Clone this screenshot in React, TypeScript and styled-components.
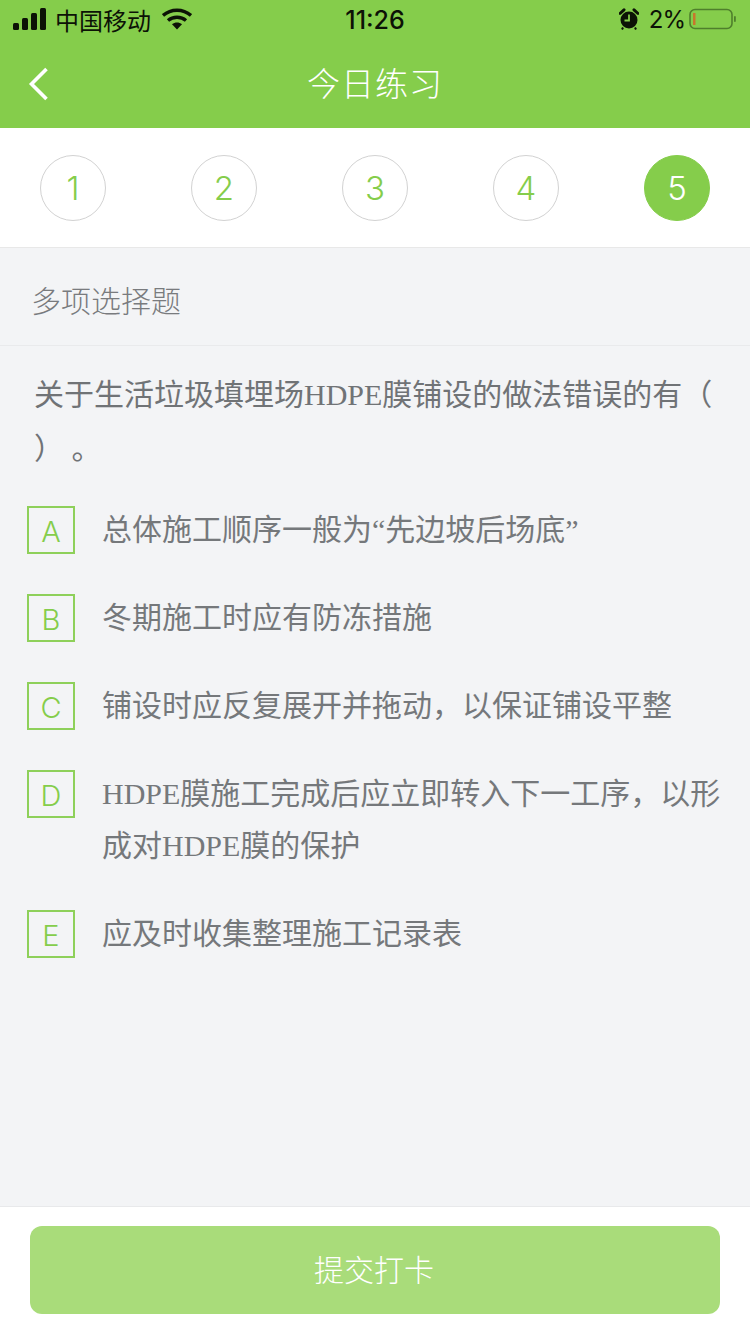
import React from "react";
import styled, { createGlobalStyle } from "styled-components";

const Global = createGlobalStyle`
  html, body { margin: 0; padding: 0; background: #f3f4f6; }
  * { box-sizing: border-box; }
`;
const Page = styled.div`
  width: 750px; height: 1334px; display: flex; flex-direction: column;
  background: #f3f4f6; overflow: hidden;
  font-family: "Liberation Serif", "Noto Sans CJK SC", serif;
`;
const Header = styled.header`background: #85cd4b; height: 128px; display: flex; flex-direction: column;`;
const StatusBar = styled.div`
  height: 40px; padding: 0 13px 2px 13px; display: grid; grid-template-columns: 1fr auto 1fr; align-items: center;
  color: #0c1206; font-family: "Noto Sans CJK SC", sans-serif;
`;
const StatusLeft = styled.div`display: flex; align-items: center; gap: 8px; font-size: 24px;`;
const StatusRight = styled.div`display: flex; align-items: center; justify-content: flex-end; gap: 10px; font-size: 24px; font-family: "Inter", sans-serif;`;
const Clock = styled.div`font: 500 25px "Inter", sans-serif; padding-top: 2px;`;
const Percent = styled.span`letter-spacing: -1px;`;
const Nav = styled.div`flex: 1; display: flex; align-items: center; justify-content: center; position: relative; padding-bottom: 5px;`;
const Back = styled.svg`position: absolute; left: 28px; top: 27px;`;
const Title = styled.h1`margin: 0; font: 300 33px "Noto Sans CJK SC", sans-serif; color: #fff; letter-spacing: 1px;`;
const Steps = styled.div`
  height: 120px; background: #fff; border-bottom: 1px solid #e8e8e8;
  padding: 1px 40px 0; display: flex; justify-content: space-between; align-items: center;
`;
const Step = styled.div<{ $active?: boolean }>`
  width: 66px; height: 66px; border-radius: 50%; display: flex; align-items: center; justify-content: center;
  border: 1px solid ${p => (p.$active ? "#85cd4b" : "#d2d2d2")};
  background: ${p => (p.$active ? "#85cd4b" : "#fff")};
  color: ${p => (p.$active ? "#fff" : "#85cd4b")};
  font: 300 33px "Inter", sans-serif;
`;
const Kind = styled.div`
  height: 98px; padding: 5px 31px 0; border-bottom: 1px solid #e9eaec; display: flex; align-items: center;
  color: #797b7e; font: 300 30px/1 "Noto Sans CJK SC", sans-serif;
`;
const Main = styled.main`flex: 1; padding: 22px 29px 0 27px;`;
const Question = styled.p`
  margin: 0 0 28px; padding-left: 7px; font-size: 30px; font-weight: 400; line-height: 54px; color: #707376;
`;
const Options = styled.div`display: flex; flex-direction: column; gap: 36px;`;
const Option = styled.div`display: flex; gap: 27px; align-items: flex-start;`;
const Letter = styled.div`
  flex: none; width: 48px; height: 48px; margin-top: 2px; padding-top: 3px; border: 2px solid #8ed05a; color: #85cd4b;
  display: flex; align-items: center; justify-content: center; font: 300 29px "Inter", sans-serif;
`;
const OptionText = styled.div`font-size: 30px; font-weight: 400; line-height: 52px; color: #75787b;`;
const Footer = styled.footer`
  height: 128px; background: #fff; border-top: 1px solid #e8e9eb; padding: 19px 30px 0;
`;
const Submit = styled.button`
  display: block; width: 690px; height: 88px; border: 0; border-radius: 12px; background: #a9dc7a; padding: 0 2px 4px 0;
  color: #fff; font: 300 30px "Noto Sans CJK SC", sans-serif;
`;

const options: [string, string][] = [
  ["A", "总体施工顺序一般为“先边坡后场底”"],
  ["B", "冬期施工时应有防冻措施"],
  ["C", "铺设时应反复展开并拖动，以保证铺设平整"],
  ["D", "HDPE膜施工完成后应立即转入下一工序，以形成对HDPE膜的保护"],
  ["E", "应及时收集整理施工记录表"],
];

export default function App() {
  return (
    <Page>
      <Global />
      <Header>
        <StatusBar>
          <StatusLeft>
            <svg width="34" height="22" viewBox="0 0 34 22" fill="#0c1206">
              <rect x="0" y="15" width="6" height="7" rx="1.5" />
              <rect x="9" y="10" width="6" height="12" rx="1.5" />
              <rect x="18" y="5" width="6" height="17" rx="1.5" />
              <rect x="27" y="0" width="6" height="22" rx="1.5" />
            </svg>
            <span>中国移动</span>
            <svg width="30" height="22" viewBox="0 0 30 22" style={{ marginLeft: 3 }}>
              <path d="M1 7.5C9 .5 21 .5 29 7.5" fill="none" stroke="#0c1206" strokeWidth="3.4" />
              <path d="M6 12.5C11 8.2 19 8.2 24 12.5" fill="none" stroke="#0c1206" strokeWidth="3.4" />
              <path d="M10 16.2C13 14 17 14 20 16.2L15 21.5Z" fill="#0c1206" />
            </svg>
          </StatusLeft>
          <Clock>11:26</Clock>
          <StatusRight>
            <svg width="20" height="22" viewBox="0 0 20 22">
              <circle cx="10" cy="12" r="8.5" fill="#0c1206" />
              <path d="M1 5.5 5 1.8M19 5.5 15 1.8" stroke="#0c1206" strokeWidth="3" strokeLinecap="round" />
              <path d="M10 6.5V12.5H5.5" fill="none" stroke="#85cd4b" strokeWidth="1.8" />
              <path d="M4 19.5 3 21.5M16 19.5 17 21.5" stroke="#0c1206" strokeWidth="2" />
            </svg>
            <Percent>2%</Percent>
            <svg width="48" height="22" viewBox="0 0 48 22" style={{ marginLeft: -6 }}>
              <rect x="1" y="1.5" width="42" height="19" rx="5" fill="none" stroke="#4f7f2c" strokeWidth="1.6" />
              <rect x="4" y="5" width="2.5" height="12" fill="#c9762c" />
              <rect x="45" y="8" width="1.8" height="6" rx="0.9" fill="#4f7f2c" />
            </svg>
          </StatusRight>
        </StatusBar>
        <Nav>
          <Back width="22" height="34" viewBox="0 0 22 34">
            <path d="M18.5 2 3.5 17 18.5 32" fill="none" stroke="#fff" strokeWidth="3.6" />
          </Back>
          <Title>今日练习</Title>
        </Nav>
      </Header>
      <Steps>
        {[1, 2, 3, 4, 5].map(n => (
          <Step key={n} $active={n === 5}>{n}</Step>
        ))}
      </Steps>
      <Kind>多项选择题</Kind>
      <Main>
        <Question>关于生活垃圾填埋场HDPE膜铺设的做法错误的有（ ）{"\u00a0"}。</Question>
        <Options>
          {options.map(([l, t]) => (
            <Option key={l}>
              <Letter>{l}</Letter>
              <OptionText>{t}</OptionText>
            </Option>
          ))}
        </Options>
      </Main>
      <Footer>
        <Submit>提交打卡</Submit>
      </Footer>
    </Page>
  );
}
